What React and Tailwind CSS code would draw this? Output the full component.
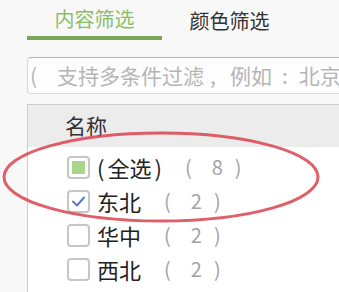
import React from 'react';

const font = { fontFamily: '"Noto Sans CJK SC", "Noto Sans", sans-serif' };

const rows = [
  { name: '全选', paren: true, count: 8, state: 'partial' },
  { name: '东北', count: 2, state: 'checked' },
  { name: '华中', count: 2, state: 'none' },
  { name: '西北', count: 2, state: 'none' },
];

const Box = ({ state }) => (
  <span className="w-[23px] h-[23px] shrink-0 border-2 border-[#c6c6c6] rounded-[4px] bg-white flex items-center justify-center">
    {state === 'partial' && <span className="w-[13px] h-[13px] bg-[#a9d58c]" />}
    {state === 'checked' && (
      <svg width="15" height="15" viewBox="0 0 15 15" fill="none">
        <path d="M2 7.5 L6 11.5 L13 3.5" stroke="#5b7cc0" strokeWidth="2" strokeLinecap="round" strokeLinejoin="round" />
      </svg>
    )}
  </span>
);

export default function App() {
  return (
    <div className="relative w-[339px] h-[292px] overflow-hidden bg-[#f8f8f8]" style={font}>
      <div className="pl-[27px]">
        {/* tabs */}
        <div className="flex h-[40px]">
          <div className="w-[135px] flex items-center justify-center border-b-4 border-[#78a856] text-[20px] text-[#8cbd69] pt-[2px]">
            内容筛选
          </div>
          <div className="w-[135px] flex items-center justify-center text-[20px] text-[#333] pt-[2px]">
            颜色筛选
          </div>
        </div>

        {/* search placeholder */}
        <div className="mt-[17px] h-[37px] w-[340px] border border-[#d2d9e0] border-t-[#aab6c3] rounded-[4px] bg-[#fdfdfd] flex items-center pl-[2px] text-[21px] text-[#b5b5b5] whitespace-nowrap overflow-hidden">
          <span>(</span>
          <span className="ml-[20px]">支持多条件过滤</span>
          <span className="ml-[6px]">,</span>
          <span className="ml-[14px]">例如</span>
          <span className="ml-[10px]">:</span>
          <span className="ml-[11px]">北京</span>
        </div>

        {/* list */}
        <div className="mt-[10px] border-l border-t border-[#cdcdcd] bg-white">
          <div className="h-[42px] bg-[#ececec] pl-[37px] flex items-center text-[21px] text-[#333]">
            名称
          </div>
          <div className="pt-[3px] pl-[39px]">
            {rows.map((r) => (
              <div key={r.name} className="h-[34px] flex items-center whitespace-nowrap">
                <Box state={r.state} />
                <span className="ml-[7px] text-[22px] text-[#222] flex items-center">
                  {r.paren && <span className="mr-[3px]">(</span>}
                  {r.name}
                  {r.paren && <span className="ml-[3px]">)</span>}
                </span>
                <span className="ml-[23px] text-[20px] text-[#a3a3a3] flex items-center">
                  <span>(</span>
                  <span className="ml-[20px]">{r.count}</span>
                  <span className="ml-[12px]">)</span>
                </span>
              </div>
            ))}
            <div className="h-[34px] flex items-center">
              <Box state="none" />
            </div>
          </div>
        </div>
      </div>

      {/* red annotation ellipse */}
      <svg className="absolute inset-0 pointer-events-none" width="339" height="292">
        <ellipse cx="161" cy="177" rx="157" ry="44" fill="none" stroke="#d9444f" strokeOpacity="0.85" strokeWidth="3" />
      </svg>
    </div>
  );
}
